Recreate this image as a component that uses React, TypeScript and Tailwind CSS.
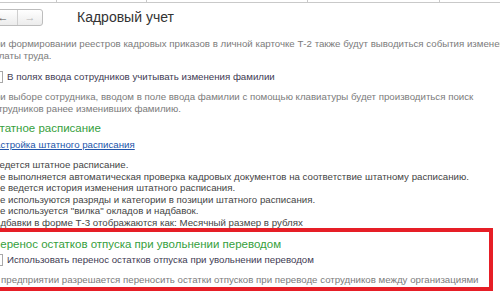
const font = { fontFamily: '"Liberation Sans", Arial, sans-serif' };

function Checkbox() {
  return <span className="inline-block h-[12px] w-[12px] shrink-0 border border-[#a8a8a8] bg-white" />;
}

function Line({ children, className = "" }: { children: React.ReactNode; className?: string }) {
  return <div className={"whitespace-nowrap " + className}>{children}</div>;
}

export default function App() {
  return (
    <div className="relative h-[300px] w-[500px] overflow-hidden bg-white text-[9.7px]" style={font}>
      <div className="flex h-[3px] border-b border-[#c9c9c9]">
        <div className="w-[57px] border-r border-[#c9c9c9]" />
        <div className="w-[90px] border-r border-[#c9c9c9]" />
        <div className="w-[161px] border-r border-[#c9c9c9]" />
        <div className="w-[132px] border-r border-[#c9c9c9]" />
      </div>

      <div className="mt-[6px] flex h-[17px] items-center">
        <div className="-ml-[12px] flex h-[17px] w-[55px] items-stretch rounded-[3px] border border-[#bdbdbd] bg-gradient-to-b from-white to-[#ececec]">
          <span className="flex w-[29px] items-center justify-center border-r border-[#cfcfcf] text-[11px] leading-none text-[#555]">←</span>
          <span className="flex flex-1 items-center justify-center text-[11px] leading-none text-[#b5b5b5]">→</span>
        </div>
        <div className="ml-[34px] text-[14px] leading-[17px] text-[#333]">Кадровый учет</div>
      </div>

      <div className="-ml-[12px] mt-[12px] leading-[12px] text-[#7b7b7b]">
        <Line>При формировании реестров кадровых приказов в личной карточке Т-2 также будут выводиться события изменения</Line>
        <Line>оплаты труда.</Line>
      </div>

      <div className="-ml-[9px] mt-[8px] flex h-[14px] items-center gap-[4px] text-[#3e3a52]">
        <Checkbox />
        <Line>В полях ввода сотрудников учитывать изменения фамилии</Line>
      </div>

      <div className="-ml-[12px] mt-[7px] leading-[12px] text-[#7b7b7b]">
        <Line>При выборе сотрудника, вводом в поле ввода фамилии с помощью клавиатуры будет производиться поиск</Line>
        <Line>сотрудников ранее изменивших фамилию.</Line>
      </div>

      <div className="-ml-[11px] mt-[6px] text-[11.5px] leading-[14px] text-[#35a03c]">Штатное расписание</div>
      <div className="-ml-[12px] mt-[4px] leading-[12px] text-[#2255aa] underline">Настройка штатного расписания</div>

      <div className="-ml-[7px] mt-[8px] leading-[11.5px] text-[#444]">
        <Line>Ведется штатное расписание.</Line>
        <Line>Не выполняется автоматическая проверка кадровых документов на соответствие штатному расписанию.</Line>
        <Line>Не ведется история изменения штатного расписания.</Line>
        <Line>Не используются разряды и категории в позиции штатного расписания.</Line>
        <Line>Не используется "вилка" окладов и надбавок.</Line>
        <Line className="-ml-[5px]">Надбавки в форме Т-3 отображаются как: Месячный размер в рублях</Line>
      </div>

      <div className="-ml-[20px] h-[63px] w-[513px] border-[4px] border-[#e61e26] pl-[8px]">
        <div className="mt-[5px] text-[11.5px] leading-[14px] text-[#35a03c]">Перенос остатков отпуска при увольнении переводом</div>
        <div className="-ml-[1px] mt-[2px] flex h-[14px] items-center gap-[4px] text-[#3e3a52]">
          <Checkbox />
          <Line>Использовать перенос остатков отпуска при увольнении переводом</Line>
        </div>
        <Line className="-ml-[6px] mt-[7px] leading-[12px] text-[#7b7b7b]">На предприятии разрешается переносить остатки отпусков при переводе сотрудников между организациями</Line>
      </div>
    </div>
  );
}
